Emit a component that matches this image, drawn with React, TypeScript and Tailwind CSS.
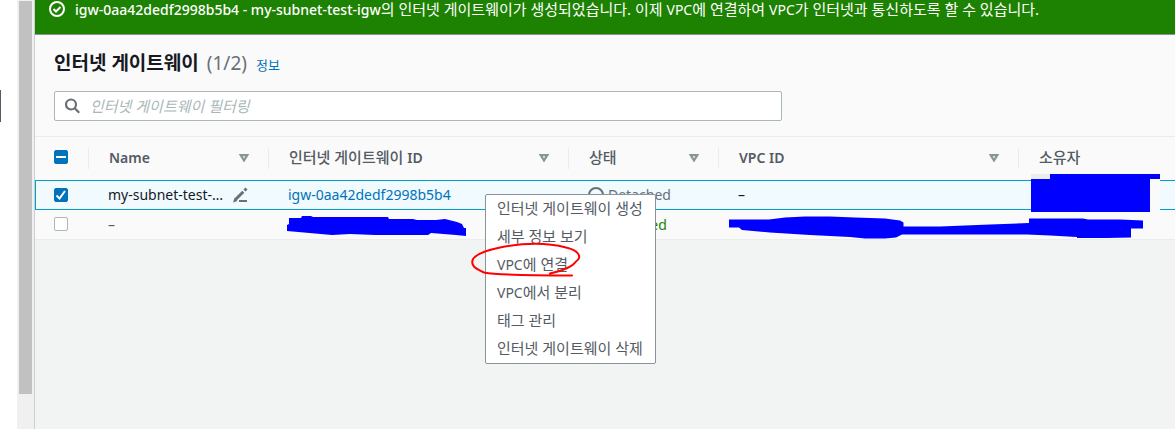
import { useEffect, useRef, useState, type ReactNode } from 'react';

const MENU_ITEMS = [
  '인터넷 게이트웨이 생성',
  '세부 정보 보기',
  'VPC에 연결',
  'VPC에서 분리',
  '태그 관리',
  '인터넷 게이트웨이 삭제',
];

/** Sets Hangul runs one size larger, and no heavier than medium, beside Latin text. */
function Mixed({ text, heading = false }: { text: string; heading?: boolean }) {
  return (
    <>
      {text.split(/([A-Za-z0-9]+)/).map((run, i) =>
        i % 2 === 1 ? (
          <span key={i}>{run}</span>
        ) : (
          <span key={i} className={heading ? 'text-[15px] font-medium' : 'text-[15px]'}>
            {run}
          </span>
        ),
      )}
    </>
  );
}

type CheckProps = {
  label: string;
  checked: boolean;
  indeterminate?: boolean;
  onChange: () => void;
};

function Check({ label, checked, indeterminate = false, onChange }: CheckProps) {
  const ref = useRef<HTMLInputElement>(null);
  useEffect(() => {
    if (ref.current) ref.current.indeterminate = indeterminate;
  }, [indeterminate]);

  return (
    <span className="mb-px grid size-[14px]">
      <input
        ref={ref}
        type="checkbox"
        aria-label={label}
        checked={checked}
        onChange={onChange}
        className="col-start-1 row-start-1 size-[14px] appearance-none rounded-[2px] border border-[#aab7b8] bg-white checked:border-[#0073bb] checked:bg-[#0073bb] indeterminate:border-[#0073bb] indeterminate:bg-[#0073bb]"
      />
      <svg
        viewBox="0 0 14 14"
        className="pointer-events-none col-start-1 row-start-1 size-[14px]"
        fill="none"
        stroke="white"
        strokeWidth="2"
        aria-hidden="true"
      >
        {indeterminate && <path d="M2 7h10" />}
        {checked && !indeterminate && <path d="M2.500 7.500l3 3 5.500-7.500" />}
      </svg>
    </span>
  );
}

function HeadCell({ children }: { children: ReactNode }) {
  return (
    <th scope="col" className="h-[43px] p-0 text-left font-semibold">
      <div className="flex h-[21px] items-center justify-between border-r border-[#eaeded] pr-[19px] pl-5">
        <span className="pb-[2px] whitespace-nowrap">{children}</span>
        <button type="button" aria-label="정렬" className="mb-[2px] size-[10px]">
          <svg viewBox="0 0 10 10" className="size-[10px]" fill="none" stroke="#879596" strokeWidth="2.200">
            <path d="M1.700 2.200h6.600L5 7.500z" />
          </svg>
        </button>
      </div>
    </th>
  );
}

function StatusRing() {
  return (
    <svg viewBox="0 0 16 16" className="size-4" fill="none" stroke="currentColor" strokeWidth="2" aria-hidden="true">
      <circle cx="8" cy="8" r="7" />
    </svg>
  );
}

const selectedCell = 'h-[30px] border-y border-[#00a1c9] bg-[#f1faff] p-0';
const plainCell = 'h-[30px] border-b border-[#eaeded] p-0';

export default function App() {
  const [first, setFirst] = useState(true);
  const [second, setSecond] = useState(false);
  const all = first && second;
  const toggleAll = () => {
    setFirst(!all);
    setSecond(!all);
  };

  return (
    <div className="relative flex min-h-screen overflow-hidden bg-[#f2f3f3] font-['Noto_Sans','Noto_Sans_CJK_KR',sans-serif] text-sm leading-5 text-[#16191f]">
      <aside className="w-[17px] shrink-0 bg-white pt-[90px]">
        <div className="h-8 w-px bg-[#545b64]" />
      </aside>
      <div className="w-[17px] shrink-0 bg-[#f0f0f0] px-[2px] pt-px">
        <div className="h-[393px] bg-[#c1c1c1]" />
      </div>

      <main className="min-w-0 flex-1 border-l border-[#c8d0d0]">
        <div
          role="status"
          className="flex h-[35px] items-start gap-[10px] border-b border-[#879596] bg-[#1d8102] pl-[14px] text-white"
        >
          <svg viewBox="0 0 16 16" className="mt-px size-4 shrink-0" fill="none" stroke="white" strokeWidth="2" aria-hidden="true">
            <circle cx="8" cy="8" r="7" />
            <path d="M4.500 8l2.500 2.500 4.500-4.500" />
          </svg>
          <p className="-mt-px whitespace-nowrap">
            <span className="font-medium">igw-0aa42dedf2998b5b4 - my-subnet-test-igw</span>
            <Mixed text="의 인터넷 게이트웨이가 생성되었습니다. 이제 VPC에 연결하여 VPC가 인터넷과 통신하도록 할 수 있습니다." />
          </p>
        </div>

        <section className="bg-[#fafafa]">
          <header className="px-[19px] pt-4 pb-[15px]">
            <div className="flex items-baseline gap-[9px]">
              <h1 className="flex gap-2 text-[19px] leading-6 font-semibold">
                인터넷 게이트웨이
                <span className="font-normal text-[#687078]">(1/2)</span>
              </h1>
              <a href="#info" className="text-[13px] text-[#0073bb]">
                정보
              </a>
            </div>
            <label className="mt-4 flex h-[30px] w-[728px] max-w-full items-center gap-[9px] rounded-[2px] border border-[#aab7b8] bg-white px-[10px]">
              <svg viewBox="0 0 16 16" className="size-4 shrink-0" fill="none" stroke="#687078" strokeWidth="2.200" aria-hidden="true">
                <circle cx="6" cy="6.500" r="5" />
                <path d="M9.500 10l4.700 4.700" />
              </svg>
              <input
                type="text"
                aria-label="인터넷 게이트웨이 필터링"
                placeholder="인터넷 게이트웨이 필터링"
                className="min-w-0 flex-1 bg-transparent text-[15px] outline-none placeholder:text-[#aab7b8] placeholder:italic"
              />
            </label>
          </header>

          <table className="w-full table-fixed border-separate border-spacing-0 border-t border-[#eaeded]">
            <colgroup>
              <col className="w-[54px]" />
              <col className="w-[180px]" />
              <col className="w-[300px]" />
              <col className="w-[150px]" />
              <col className="w-[300px]" />
              <col />
            </colgroup>
            <thead className="text-[#545b64]">
              <tr>
                <th scope="col" className="p-0">
                  <div className="flex h-[21px] items-center border-r border-[#eaeded] pb-[2px] pl-[19px]">
                    <Check label="모두 선택" checked={all} indeterminate={first !== second} onChange={toggleAll} />
                  </div>
                </th>
                <HeadCell>Name</HeadCell>
                <HeadCell>
                  <Mixed heading text="인터넷 게이트웨이 ID" />
                </HeadCell>
                <HeadCell>
                  <Mixed heading text="상태" />
                </HeadCell>
                <HeadCell>VPC ID</HeadCell>
                <th scope="col" className="p-0 pb-[2px] pl-5 text-left font-semibold">
                  <Mixed heading text="소유자" />
                </th>
              </tr>
            </thead>
            <tbody>
              <tr>
                <td className={`${selectedCell} border-l`}>
                  <div className="pl-[18px]">
                    <Check label="my-subnet-test-igw 선택" checked={first} onChange={() => setFirst(!first)} />
                  </div>
                </td>
                <td className={selectedCell}>
                  <div className="flex items-center gap-2 pl-[19px]">
                    <span className="w-[117px] truncate">my-subnet-test-igw</span>
                    <button type="button" aria-label="이름 편집" className="size-4">
                      <svg viewBox="0 0 16 16" className="size-4" fill="none" stroke="#687078">
                        <path d="M2.500 12.500L10.300 4.700M11.500 3.500l2-2" strokeWidth="3" />
                        <path d="M0 15.500l1.500-4.500 3 3z" fill="#687078" stroke="none" />
                        <path d="M6 14h8" strokeWidth="2" />
                      </svg>
                    </button>
                  </div>
                </td>
                <td className={selectedCell}>
                  <a href="#igw-0aa42dedf2998b5b4" className="ml-[19px] text-[#0073bb]">
                    igw-0aa42dedf2998b5b4
                  </a>
                </td>
                <td className={selectedCell}>
                  <span className="ml-[19px] flex items-center gap-1 text-[#687078]">
                    <StatusRing />
                    Detached
                  </span>
                </td>
                <td className={selectedCell}>
                  <span className="ml-[19px]">–</span>
                </td>
                <td className={selectedCell} />
              </tr>
              <tr>
                <td className={plainCell}>
                  <div className="pl-[19px]">
                    <Check label="두 번째 게이트웨이 선택" checked={second} onChange={() => setSecond(!second)} />
                  </div>
                </td>
                <td className={plainCell}>
                  <span className="ml-[19px] text-[#545b64]">–</span>
                </td>
                <td className={plainCell} />
                <td className={plainCell}>
                  <span className="ml-[19px] flex items-center gap-1 text-[#1d8102]">
                    <StatusRing />
                    Attached
                  </span>
                </td>
                <td className={plainCell} />
                <td className={plainCell} />
              </tr>
            </tbody>
          </table>
        </section>
      </main>

      <ul
        role="menu"
        className="absolute top-[194px] left-[485px] rounded-[2px] border border-[#879596] bg-white text-[#545b64]"
      >
        {MENU_ITEMS.map((item) => (
          <li key={item} role="none">
            <button type="button" role="menuitem" className="block h-7 w-full pr-3 pb-[2px] pl-[11px] text-left whitespace-nowrap">
              <Mixed text={item} />
            </button>
          </li>
        ))}
      </ul>

      <svg
        width="1175"
        height="429"
        viewBox="0 0 1175 429"
        className="pointer-events-none absolute top-0 left-0 max-w-none"
        aria-hidden="true"
      >
        <path d="M1031 174h19v5h-19z" fill="#eaeded" />
        <path d="M1150 179h10v33h-10z" fill="#fafafa" />
        <g fill="#0000ff">
          <path d="M1050 174h110v5h-10v33h-119v-33h19z" />
          <path d="M289 218h12l1-2h9l2 1h75l1 2h24l4 1h19l9-1 12 3 5 2 2 4h2v8l-10-1-25-2-3 2h-53l-25-1-18 1-45-4v-6l2-1z" />
          <path d="M729 219.500H769L785 217.500L805 216.500H830L855 217.500L885 218.500L900 220.500L903.500 222.500V226.500H940L990 224.500L1029 223V218.500H1083L1088 219.500H1120L1143 220.500V228.500H1131V237.500L1107 238H1077V237L1050 235.500L1027 234.500H902L896 237.500L885 238.500H865L850 237L810 235L770 232.500L742 230L739 227.500H729z" />
        </g>
        <path
          d="M550 273.500C563 271 573 266 576 261.500C583 257 578 250 566 247.500C545 242 520 243.500 500 247.500C488 250 477 253 473 259C470 266 476 269 484 272.500C500 275.500 532 275.500 572 275.500"
          fill="none"
          stroke="#ff0000"
          strokeWidth="2"
          strokeLinecap="round"
        />
      </svg>
    </div>
  );
}
